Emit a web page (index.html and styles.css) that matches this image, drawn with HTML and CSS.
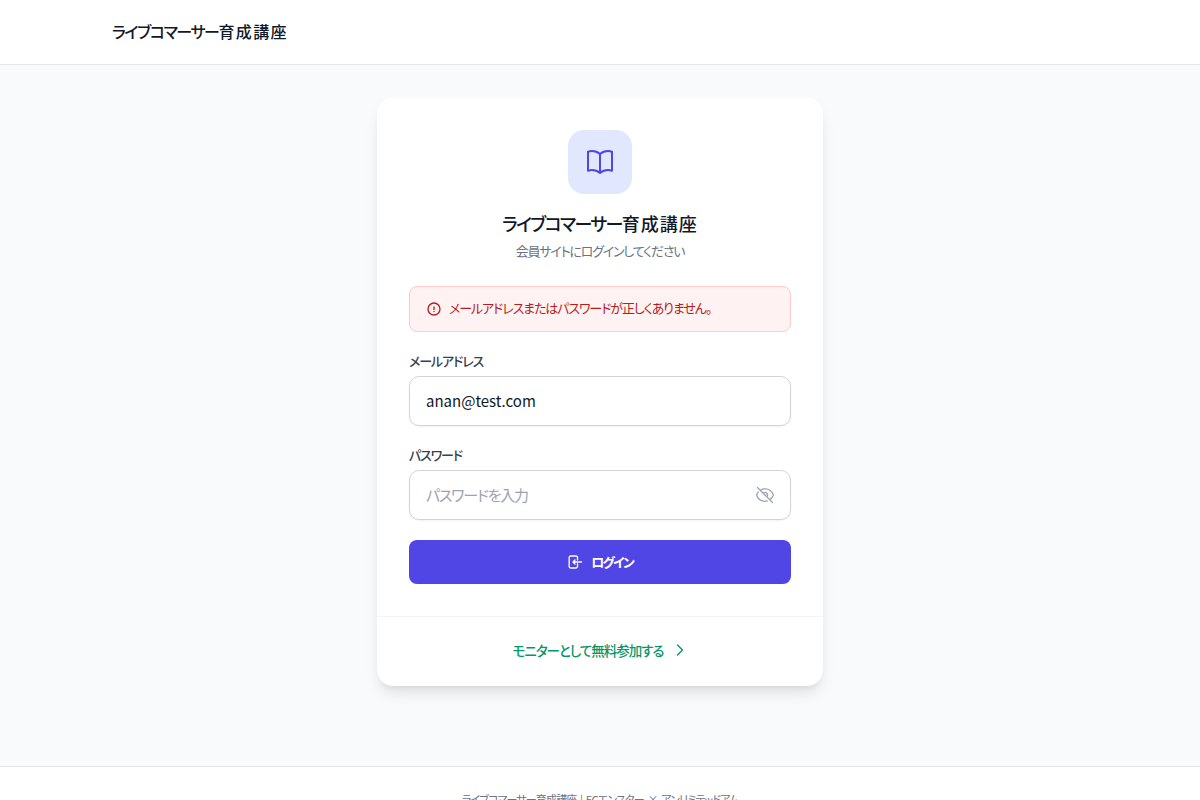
FILE: index.html
```html
<!DOCTYPE html>
<html lang="ja">
<head>
<meta charset="utf-8">
<title>ライブコマーサー育成講座</title>
<link rel="stylesheet" href="styles.css">
</head>
<body>
<header class="site-header">
  <div class="brand"><span class="kana">ライブコマーサー</span><span class="kanji">育成講座</span></div>
</header>
<main class="site-main">
  <section class="card">
    <div class="card-body">
      <div class="logo-tile">
        <svg class="logo-icon" viewBox="0 0 24 24" fill="none" stroke="currentColor" stroke-width="1.5" stroke-linecap="round" stroke-linejoin="round"><path d="M12 6.042A8.967 8.967 0 0 0 6 3.75c-1.052 0-2.062.18-3 .512v14.25A8.987 8.987 0 0 1 6 18c2.305 0 4.408.867 6 2.292m0-14.25a8.966 8.966 0 0 1 6-2.292c1.052 0 2.062.18 3 .512v14.25A8.987 8.987 0 0 0 18 18a8.967 8.967 0 0 0-6 2.292m0-14.25v14.25"/></svg>
      </div>
      <h1 class="card-title"><span class="kana">ライブコマーサー</span><span class="kanji">育成講座</span></h1>
      <p class="card-sub">会員サイトにログインしてください</p>
      <div class="alert">
        <svg class="icon-16" viewBox="0 0 24 24" fill="none" stroke="currentColor" stroke-width="2" stroke-linecap="round" stroke-linejoin="round"><path d="M12 9v3.75m9-.75a9 9 0 1 1-18 0 9 9 0 0 1 18 0Zm-9 3.75h.008v.008H12v-.008Z"/></svg>
        <span class="raised">メールアドレスまたはパスワードが正しくありません。</span>
      </div>
      <form class="form">
        <div class="field">
          <label class="label" for="email">メールアドレス</label>
          <input class="input" id="email" type="email" value="anan@test.com">
        </div>
        <div class="field">
          <label class="label" for="password">パスワード</label>
          <div class="input-wrap">
            <input class="input" id="password" type="password" placeholder="パスワードを入力">
            <svg class="eye" viewBox="0 0 24 24" fill="none" stroke="currentColor" stroke-width="1.5" stroke-linecap="round" stroke-linejoin="round"><path d="M3.98 8.223A10.477 10.477 0 0 0 1.934 12C3.226 16.338 7.244 19.5 12 19.5c.993 0 1.953-.138 2.863-.395M6.228 6.228A10.45 10.45 0 0 1 12 4.5c4.756 0 8.773 3.162 10.065 7.498a10.522 10.522 0 0 1-4.293 5.774M6.228 6.228 3 3m3.228 3.228 3.65 3.65m7.894 7.894L21 21m-3.228-3.228-3.65-3.65m0 0a3 3 0 1 0-4.243-4.243m4.242 4.242L9.88 9.88"/></svg>
          </div>
        </div>
        <button class="submit" type="button">
          <svg class="icon-16" viewBox="0 0 24 24" fill="none" stroke="currentColor" stroke-width="2" stroke-linecap="round" stroke-linejoin="round"><path d="M15.75 9V5.25A2.25 2.25 0 0 0 13.5 3h-8a2.25 2.25 0 0 0-2.25 2.25v13.5A2.25 2.25 0 0 0 5.5 21h8a2.25 2.25 0 0 0 2.25-2.25V15M12 9l-3 3 3 3M9 12h12.75"/></svg>
          <span class="raised-sm">ログイン</span>
        </button>
      </form>
    </div>
    <div class="card-foot">
      <a class="monitor-link" href="#">
        <span>モニターとして無料参加する</span>
        <svg class="icon-16" viewBox="0 0 24 24" fill="none" stroke="currentColor" stroke-width="2" stroke-linecap="round" stroke-linejoin="round"><path d="m8.25 4.5 7.5 7.5-7.5 7.5"/></svg>
      </a>
    </div>
  </section>
</main>
<footer class="site-footer">ライブコマーサー育成講座 | ECエンスター × アンリミテッドアム</footer>
</body>
</html>
```
FILE: styles.css
```css
* { box-sizing: border-box; }
html, body { margin: 0; padding: 0; }
body {
  font-family: "Noto Sans CJK JP", "Noto Sans", sans-serif;
  font-feature-settings: "palt";
  background: #f9fafb;
  color: #111827;
}
.site-header {
  height: 65px;
  background: #fff;
  border-bottom: 1px solid #e5e7eb;
  display: flex;
  align-items: center;
  padding: 0 112px 2px;
}
.brand { font-size: 16px; font-weight: 500; line-height: 24px; }
.brand .kana { letter-spacing: -1.4px; }
.brand .kanji { letter-spacing: 1.3px; }
.site-main {
  display: flex;
  justify-content: center;
  padding: 33px 0 80px;
}
.card {
  width: 446px;
  height: 588px;
  background: #fff;
  border-radius: 16px;
  box-shadow: 0 10px 15px -3px rgba(0,0,0,.1), 0 4px 6px -4px rgba(0,0,0,.1);
  display: flex;
  flex-direction: column;
}
.card-body {
  padding: 32px;
  border-bottom: 1px solid #f3f4f6;
  display: flex;
  flex-direction: column;
  align-items: center;
}
.logo-tile {
  width: 64px;
  height: 64px;
  border-radius: 16px;
  background: #e0e7ff;
  color: #4f46e5;
  display: flex;
  align-items: center;
  justify-content: center;
}
.logo-icon { width: 32px; height: 32px; }
.card-title { margin: 15px 0 0; font-size: 18px; font-weight: 500; line-height: 28px; }
.card-title .kana { letter-spacing: -1.6px; }
.card-title .kanji { letter-spacing: 1px; }
.card-sub { margin: 4px 0 0; font-size: 13px; letter-spacing: -1.2px; line-height: 20px; color: #6b7280; }
.alert {
  align-self: stretch;
  margin-top: 25px;
  height: 46px;
  padding: 0 16px;
  display: flex;
  align-items: center;
  gap: 7px;
  background: #fef2f2;
  border: 1px solid #fecaca;
  border-radius: 8px;
  color: #b91c1c;
  font-size: 13px;
  letter-spacing: -1.1px;
}
.raised { padding-bottom: 4px; }
.raised-sm { padding-bottom: 2px; }
.icon-16 { width: 16px; height: 16px; flex: none; }
.form { align-self: stretch; margin-top: 19px; display: flex; flex-direction: column; gap: 19px; }
.field { display: flex; flex-direction: column; gap: 5px; }
.label { font-size: 13px; letter-spacing: -1.1px; font-weight: 500; line-height: 20px; color: #374151; }
.input-wrap { position: relative; }
.input {
  display: block;
  width: 100%;
  height: 50px;
  padding: 0 16px 2px;
  border: 1px solid #d1d5db;
  border-radius: 10px;
  background: #fff;
  box-shadow: 0 1px 2px rgba(0,0,0,.05);
  font: inherit;
  font-size: 15px;
  font-feature-settings: "palt";
  color: #111827;
  outline: none;
}
.input::placeholder { color: #9ca3af; opacity: 1; letter-spacing: -1.2px; }
.eye {
  position: absolute;
  right: 16px;
  top: 15px;
  width: 20px;
  height: 20px;
  color: #9ca3af;
}
.submit {
  margin-top: 1px;
  height: 44px;
  border: 0;
  border-radius: 8px;
  background: #4f46e5;
  color: #fff;
  font: inherit;
  font-size: 13px;
  letter-spacing: -1.8px;
  font-weight: 700;
  font-feature-settings: "palt";
  display: flex;
  align-items: center;
  justify-content: center;
  gap: 8px;
}
.card-foot {
  flex: 1;
  display: flex;
  align-items: center;
  justify-content: center;
  padding-bottom: 4px;
}
.monitor-link {
  display: flex;
  align-items: center;
  gap: 8px;
  color: #059669;
  font-size: 13.5px;
  letter-spacing: -1px;
  font-weight: 500;
  text-decoration: none;
}
.site-footer {
  background: #fff;
  border-top: 1px solid #e5e7eb;
  padding: 24px;
  text-align: center;
  font-size: 11px;
  letter-spacing: -.85px;
  word-spacing: 2px;
  line-height: 16px;
  color: #6b7280;
}
```
